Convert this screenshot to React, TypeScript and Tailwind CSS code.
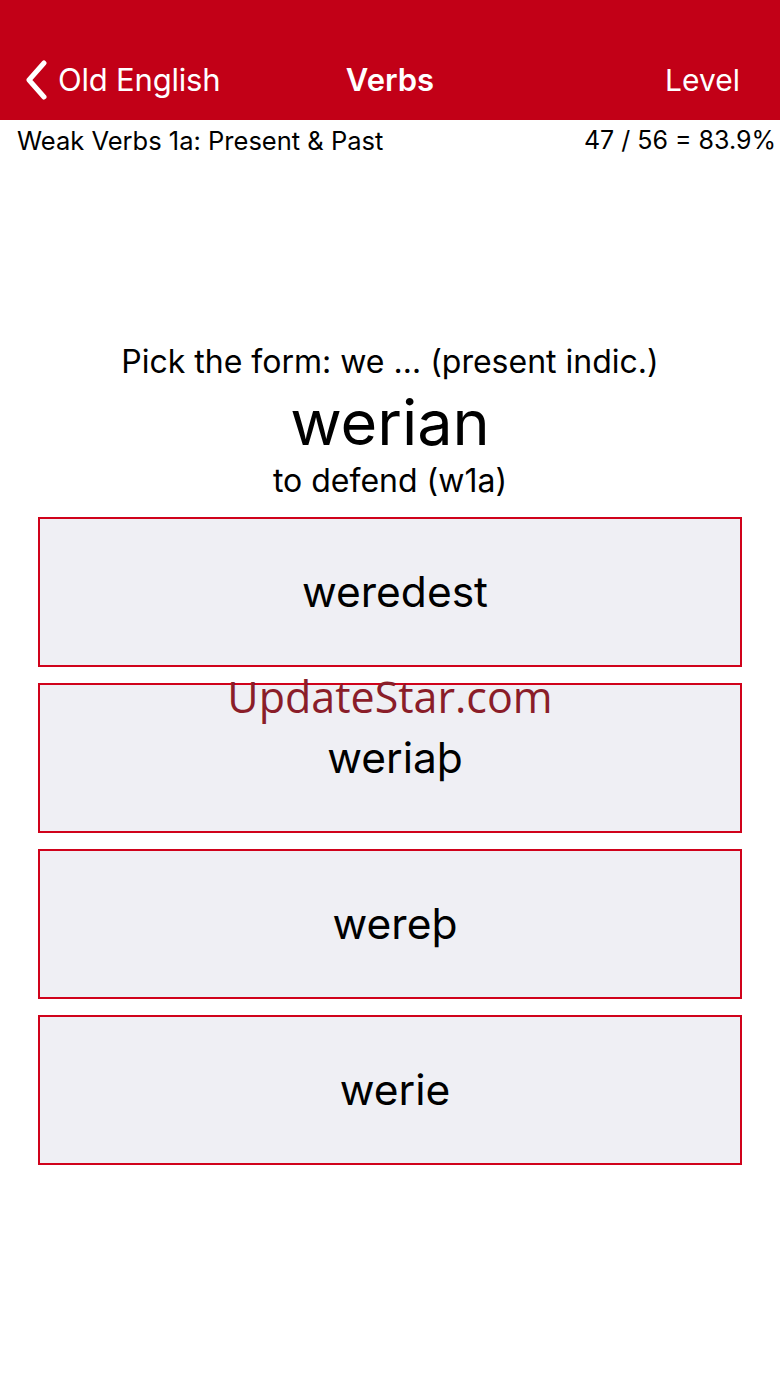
export default function App() {
  const options = ['weredest', 'weriaþ', 'wereþ', 'werie']

  return (
    <div className="relative w-[780px] h-[1387px] bg-white overflow-hidden" style={{ fontFamily: 'Inter, "Noto Sans", sans-serif' }}>
      {/* Nav bar */}
      <div className="bg-[#c20017] h-[120px] pt-[40px]">
        <div className="relative h-[80px] flex items-center px-[24px] text-white">
          <div className="flex items-center gap-[10px]">
            <svg width="24" height="40" viewBox="0 0 24 40" fill="none">
              <path d="M20 3 L5 20 L20 37" stroke="white" strokeWidth="5" strokeLinecap="round" strokeLinejoin="round" />
            </svg>
            <span className="text-[31px] tracking-[-0.2px]">Old English</span>
          </div>
          <span className="absolute left-1/2 -translate-x-1/2 text-[31px] font-semibold">Verbs</span>
          <span className="ml-auto mr-[16px] text-[30px]">Level</span>
        </div>
      </div>

      {/* Sub header */}
      <div className="flex items-center justify-between h-[42px] pl-[17px] pr-[4px] text-[25.5px] text-black">
        <span>Weak Verbs 1a: Present &amp; Past</span>
        <span className="text-[25px]">47 / 56 = 83.9%</span>
      </div>

      {/* Question */}
      <div className="flex flex-col items-center mt-[180px] text-black">
        <div className="text-[32px] leading-[40px]">Pick the form: we … (present indic.)</div>
        <div className="text-[63px] leading-[72px] mt-[4px]">werian</div>
        <div className="text-[32px] leading-[40px] mt-[3px]">to defend (w1a)</div>
      </div>

      {/* Options */}
      <div className="flex flex-col gap-[16px] px-[38px] mt-[16px]">
        {options.map((o) => (
          <button
            key={o}
            className="h-[150px] w-full bg-[#efeff4] border-2 border-[#d0021b] flex items-center justify-center pl-[10px] text-[42.5px] text-black"
          >
            {o}
          </button>
        ))}
      </div>

      {/* Watermark */}
      <div
        className="absolute left-0 right-0 top-[665px] text-center text-[43px] text-[#8a1d29] pointer-events-none"
        style={{ fontFamily: '"Open Sans", "Noto Sans", sans-serif' }}
      >
        UpdateStar.com
      </div>
    </div>
  )
}
